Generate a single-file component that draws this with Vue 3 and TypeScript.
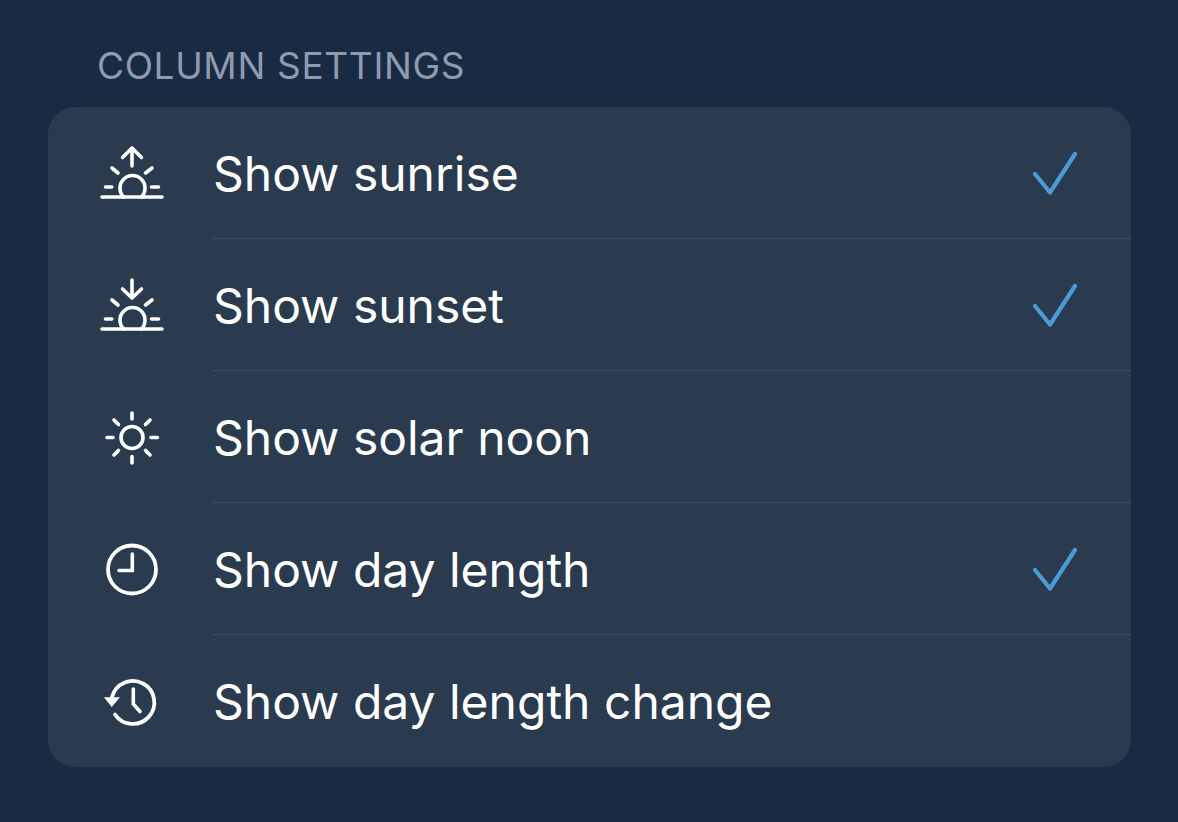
<script setup lang="ts">
interface Row {
  label: string
  checked: boolean
  icon: 'sunrise' | 'sunset' | 'noon' | 'clock' | 'history'
}

const rows: Row[] = [
  { label: 'Show sunrise', checked: true, icon: 'sunrise' },
  { label: 'Show sunset', checked: true, icon: 'sunset' },
  { label: 'Show solar noon', checked: false, icon: 'noon' },
  { label: 'Show day length', checked: true, icon: 'clock' },
  { label: 'Show day length change', checked: false, icon: 'history' },
]
</script>

<template>
  <main class="page">
    <h2 class="heading">COLUMN SETTINGS</h2>
    <section class="card">
      <div v-for="row in rows" :key="row.label" class="row">
        <svg class="icon" viewBox="0 0 64 64" width="64" height="64" fill="none" stroke="#fff" stroke-width="3.6" stroke-linecap="round">
          <template v-if="row.icon === 'sunrise'">
            <path d="M2 56H62" />
            <path d="M23.8 56A12.5 12.5 0 1 1 41.2 56" />
            <path d="M32 7V25M22.5 16.5L32 7L41.5 16.5" stroke-linejoin="round" />
            <path d="M5.5 46H11.8M51.5 46H58.5M12 27L18 32M52 27L45.5 32" />
          </template>
          <template v-else-if="row.icon === 'sunset'">
            <path d="M2 56H62" />
            <path d="M23.8 56A12.5 12.5 0 1 1 41.2 56" />
            <path d="M32 7V25M22.5 16L32 25L41.5 16" stroke-linejoin="round" />
            <path d="M5.5 46H11.8M51.5 46H58.5M12 27L18 32M52 27L45.5 32" />
          </template>
          <template v-else-if="row.icon === 'noon'">
            <circle cx="32" cy="32.5" r="11" />
            <path d="M32 8V14M32 51.5V58M7 32.5H13M51 32.5H57.5M14 15L18.5 19.5M50 15L45.5 19.5M14 50L18.5 45.5M50 50L45.5 45.5" />
          </template>
          <template v-else-if="row.icon === 'clock'">
            <circle cx="32" cy="32.5" r="24" stroke-width="3.8" />
            <path d="M32.3 17V33.5H19" />
          </template>
          <template v-else>
            <path d="M15 45.5A21.5 21.5 0 1 0 12 28" stroke-width="3.8" />
            <path d="M4 28.3H20L11.7 38Z" fill="#fff" stroke="none" />
            <path d="M33.3 20V35L40 42.5" />
          </template>
        </svg>
        <div class="content">
          <span class="label">{{ row.label }}</span>
          <svg v-if="row.checked" class="check" viewBox="0 0 44 44" width="44" height="44" fill="none" stroke="#4a9bd6" stroke-width="4.2" stroke-linecap="round" stroke-linejoin="round">
            <path d="M2 23L17 41.5L42 3" />
          </svg>
        </div>
      </div>
    </section>
  </main>
</template>

<style>
html,
body {
  margin: 0;
  background: #192a43;
}
</style>

<style scoped>
.page {
  box-sizing: border-box;
  width: 1178px;
  height: 822px;
  padding: 44px 47px 0 48px;
  background: #192a43;
  font-family: Inter, "Liberation Sans", sans-serif;
}

.heading {
  margin: 0 0 19px 49px;
  font-size: 37px;
  line-height: 44px;
  font-weight: 400;
  letter-spacing: 0.65px;
  color: #8f9bb0;
  white-space: nowrap;
}

.card {
  height: 660px;
  border-radius: 27px;
  background: #2a3b50;
  overflow: hidden;
}

.row {
  display: flex;
  align-items: center;
  height: 132px;
  padding-left: 52px;
}

.icon {
  flex: none;
  margin-right: 49px;
}

.content {
  flex: 1;
  box-sizing: border-box;
  display: flex;
  align-items: center;
  justify-content: space-between;
  height: 132px;
  padding: 0 54px 0 0;
  border-bottom: 1px solid #3e4b60;
}

.row:last-child .content {
  border-bottom: none;
}

.label {
  padding-top: 2px;
  font-size: 48px;
  line-height: 56px;
  font-weight: 400;
  color: #fff;
  white-space: nowrap;
}

.check {
  flex: none;
}
</style>
